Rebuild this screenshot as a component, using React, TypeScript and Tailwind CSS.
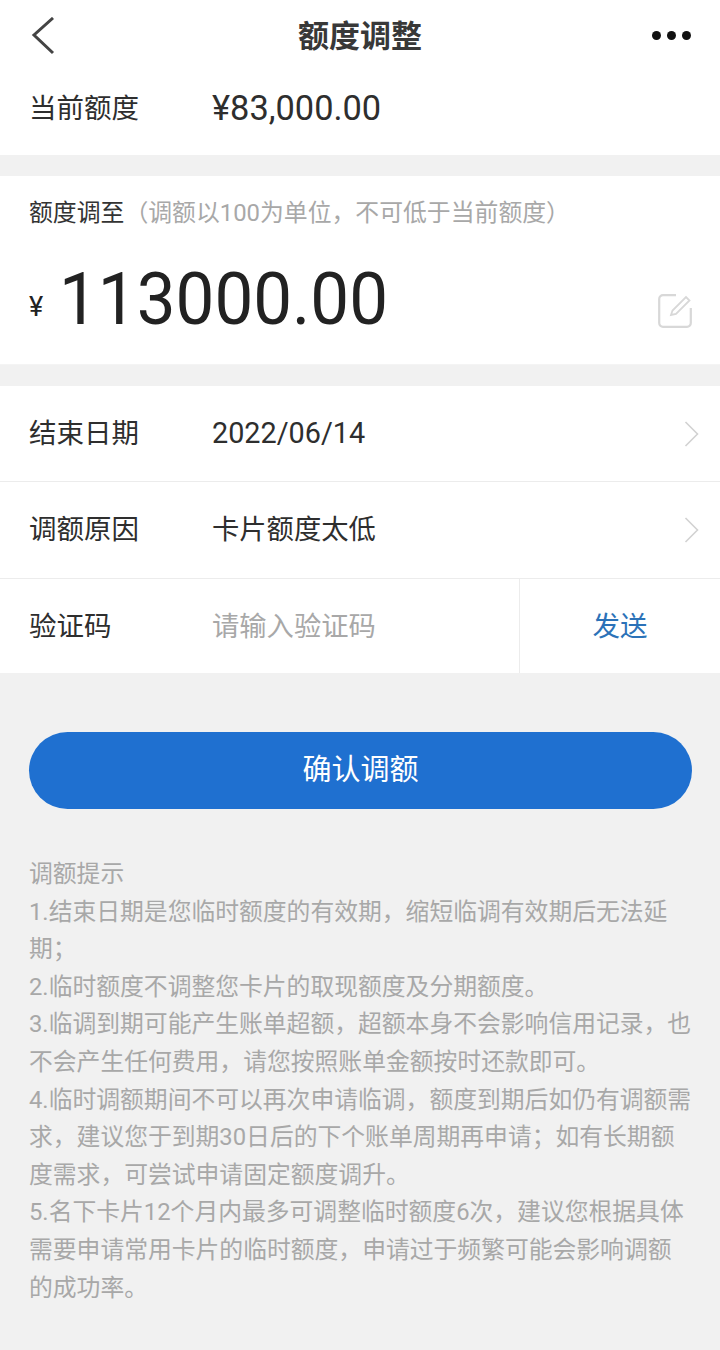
const cjk = { fontFamily: '"Roboto", "Noto Sans CJK SC", sans-serif' }

function Chevron() {
  return (
    <svg width="15" height="26" viewBox="0 0 15 26" fill="none">
      <path d="M1.5 1L13.5 13L1.5 25" stroke="#d2d2d2" strokeWidth="1.6" />
    </svg>
  )
}

function Row({ label, value, tall, latin }: { label: string; value: string; tall?: boolean; latin?: boolean }) {
  return (
    <div className={`flex items-center pl-[29px] pr-[21px] bg-white border-b border-[#ececec] ${tall ? 'h-[97px]' : 'h-[96px]'}`}>
      <div className="w-[183px] text-[27.5px] text-[#2e2e2e]">{label}</div>
      <div className={`flex-1 text-[#2e2e2e] ${latin ? 'text-[28.8px]' : 'text-[27.3px]'}`}>{value}</div>
      <Chevron />
    </div>
  )
}

export default function App() {
  return (
    <div className="w-[720px] h-[1350px] overflow-hidden bg-[#f1f1f1]" style={cjk}>
      <header className="relative h-[70px] bg-white flex items-center justify-center">
        <svg width="24" height="38" viewBox="0 0 24 38" fill="none" className="absolute left-[31px] top-[17px]">
          <path d="M22 1L3 18L22 36" stroke="#444" strokeWidth="3" />
        </svg>
        <h1 className="text-[31px] font-bold text-[#383838] mt-[4px]">额度调整</h1>
        <div className="absolute right-[29px] top-[31px] flex gap-[6px]">
          <span className="w-[9px] h-[9px] rounded-full bg-[#111]" />
          <span className="w-[9px] h-[9px] rounded-full bg-[#111]" />
          <span className="w-[9px] h-[9px] rounded-full bg-[#111]" />
        </div>
      </header>

      <section className="h-[85px] bg-white flex items-start pl-[29px] pt-[15px] text-[#2e2e2e]">
        <div className="w-[183px] mt-[1px] text-[27.5px] leading-[46px]">当前额度</div>
        <div className="text-[34.4px] leading-[46px]">¥83,000.00</div>
      </section>

      <section className="mt-[21px] h-[189px] bg-white pl-[29px] pr-[28px] border-b border-[#f4f4f4]">
        <div className="pt-[20px] text-[23.85px] leading-[34px] text-[#333]">
          额度调至<span className="text-[#a8a8a8]">（调额以100为单位，不可低于当前额度）</span>
        </div>
        <div className="flex items-center mt-[28px]">
          <span className="text-[27px] text-[#222] w-[30px] mt-[14px]">¥</span>
          <span className="text-[72px] leading-[84px] text-[#222] origin-left scale-x-[0.96]">113000.00</span>
          <svg width="34" height="34" viewBox="0 0 34 34" fill="none" className="ml-auto mt-[22px]">
            <path d="M18 1.2H5a3.8 3.8 0 0 0-3.8 3.8v24a3.8 3.8 0 0 0 3.8 3.8h24a3.8 3.8 0 0 0 3.8-3.8V14" stroke="#d8d8d8" strokeWidth="2.2" />
            <path d="M13 21l1.5-4.5L28 3l3.5 3.5L18 20z" stroke="#d8d8d8" strokeWidth="1.8" />
          </svg>
        </div>
      </section>

      <section className="mt-[21px]">
        <Row label="结束日期" value="2022/06/14" latin />
        <Row label="调额原因" value="卡片额度太低" tall />
        <div className="flex items-stretch h-[94px] bg-white">
          <div className="flex-1 flex items-center pl-[29px] pt-[2px]">
            <div className="w-[183px] text-[27.5px] text-[#2e2e2e]">验证码</div>
            <div className="text-[27.3px] text-[#a8a8a8]">请输入验证码</div>
          </div>
          <div className="w-[201px] border-l border-[#ececec] pt-[2px] flex items-center justify-center text-[27.5px] text-[#2b72b8]">发送</div>
        </div>
      </section>

      <button className="block ml-[29px] mt-[59px] w-[663px] h-[77px] pt-[1px] rounded-full bg-[#1f70d0] text-white text-[29px]">确认调额</button>

      <section className="mt-[47px] pl-[29px] pr-[26px] text-[23.8px] leading-[37.6px] text-[#a8a8a8]">
        <p>调额提示</p>
        <p>1.结束日期是您临时额度的有效期，缩短临调有效期后无法延期；</p>
        <p>2.临时额度不调整您卡片的取现额度及分期额度。</p>
        <p>3.临调到期可能产生账单超额，超额本身不会影响信用记录，也不会产生任何费用，请您按照账单金额按时还款即可。</p>
        <p>4.临时调额期间不可以再次申请临调，额度到期后如仍有调额需求，建议您于到期30日后的下个账单周期再申请；如有长期额度需求，可尝试申请固定额度调升。</p>
        <p>5.名下卡片12个月内最多可调整临时额度6次，建议您根据具体需要申请常用卡片的临时额度，申请过于频繁可能会影响调额的成功率。</p>
      </section>
    </div>
  )
}
